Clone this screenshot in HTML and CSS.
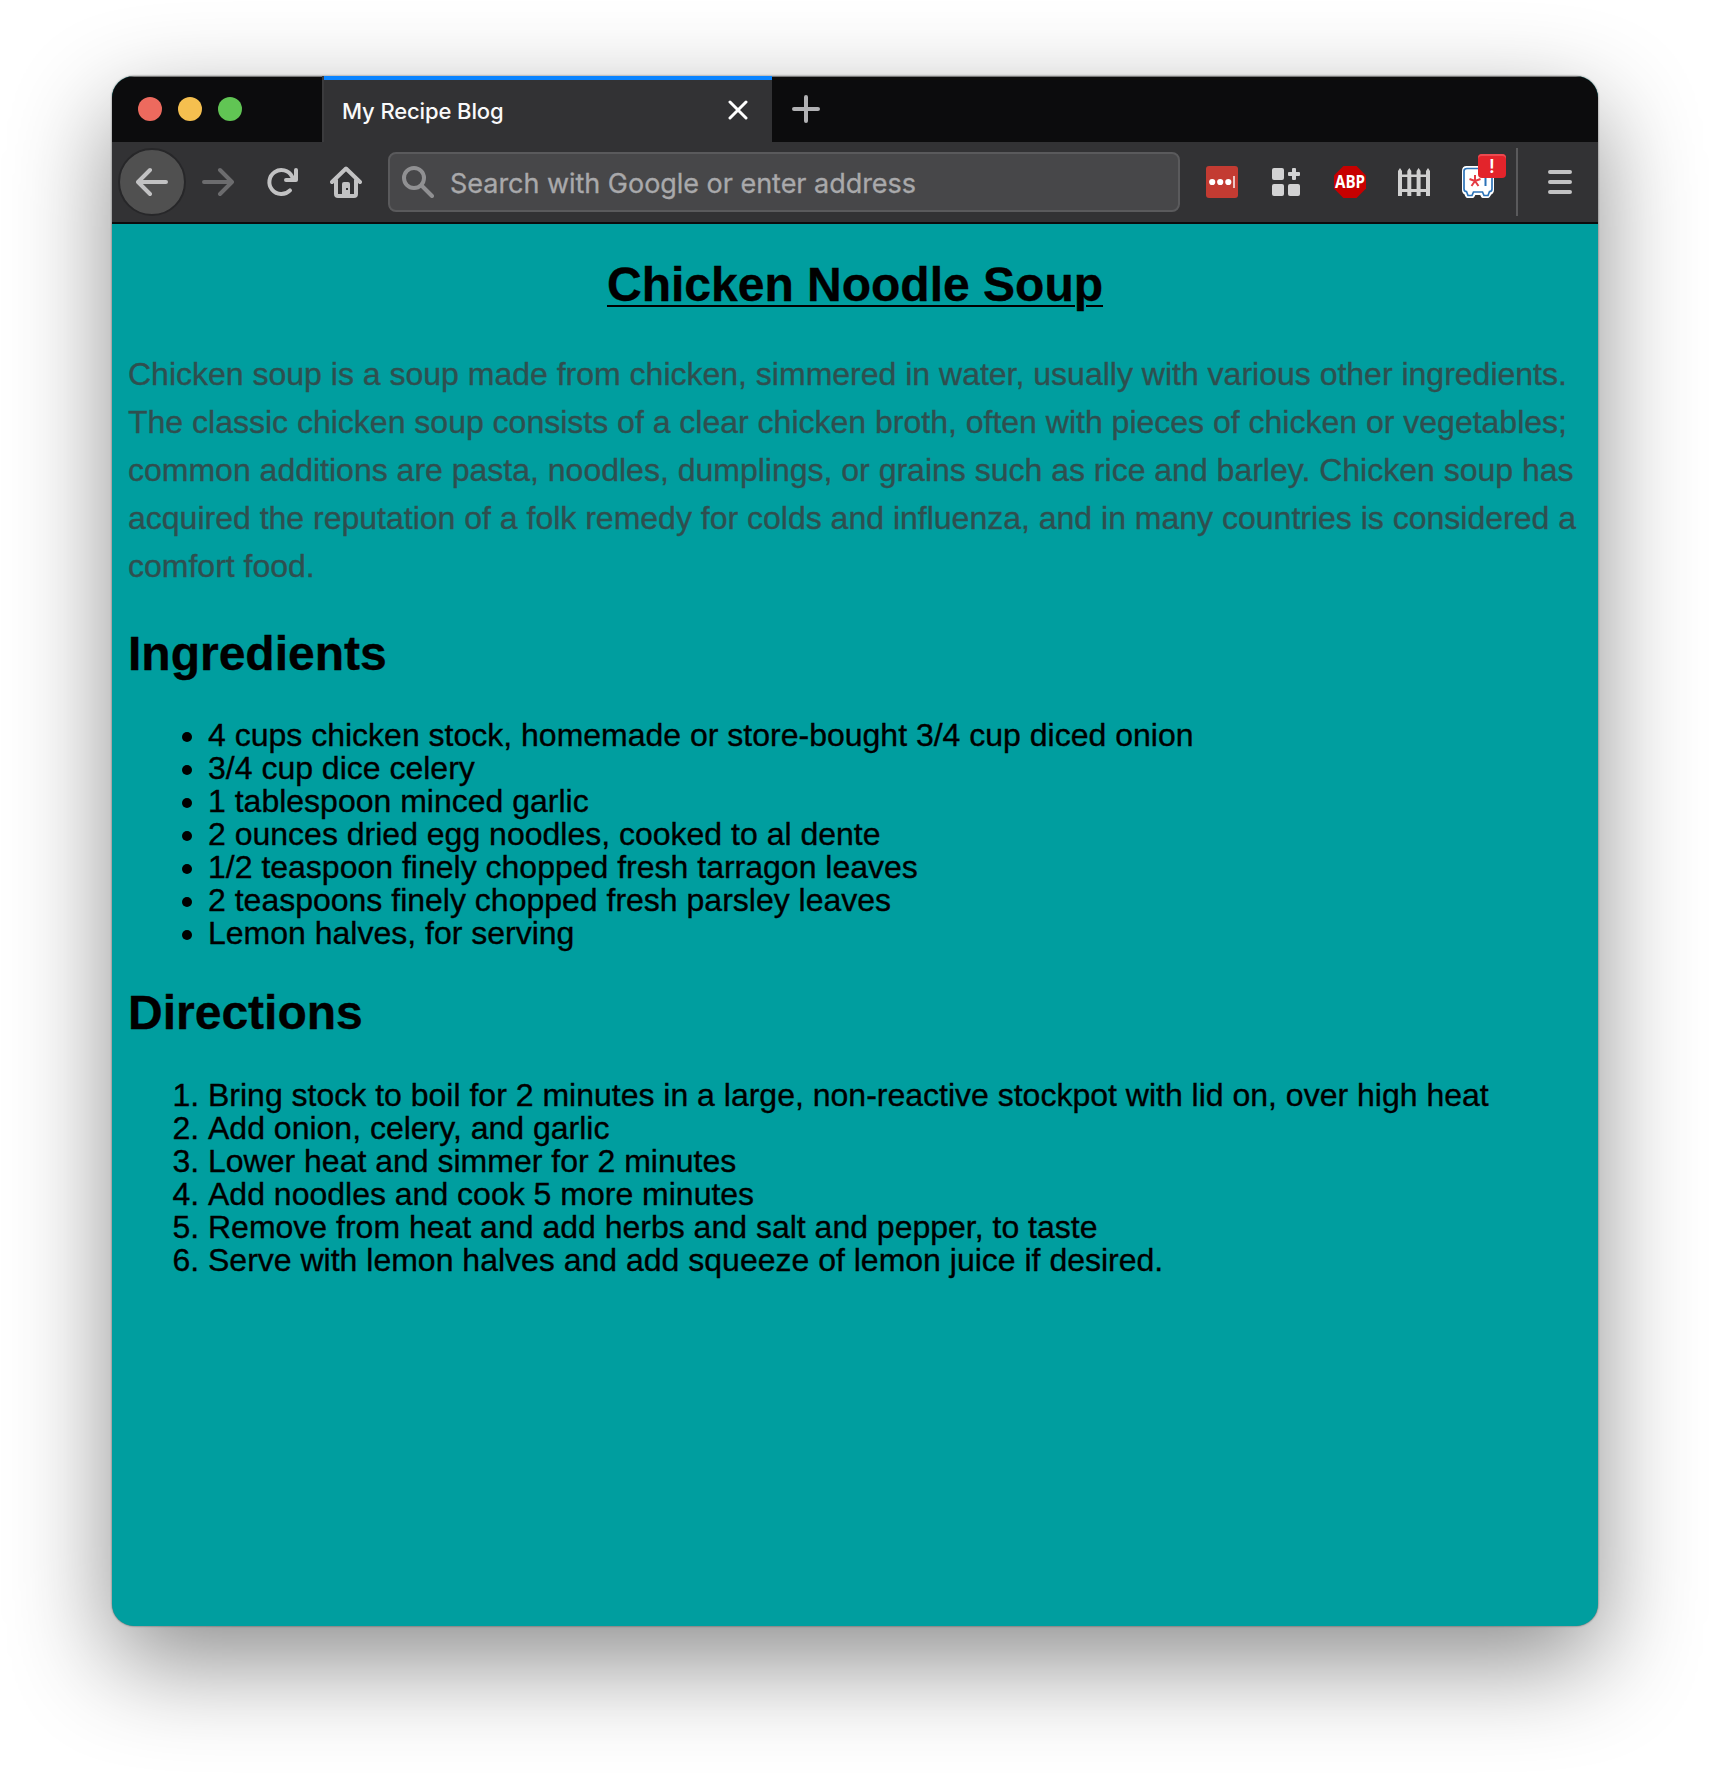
FILE: index.html
```html
<!DOCTYPE html>
<html lang="en">
<head>
<meta charset="utf-8">
<title>My Recipe Blog</title>
<link rel="stylesheet" href="styles.css">
</head>
<body>
<div class="window">
  <div class="tabbar">
    <div class="lights"><span class="light red"></span><span class="light yellow"></span><span class="light green"></span></div>
    <div class="tab">
      <span class="tab-title">My Recipe Blog</span>
      <svg class="close" width="20" height="20" viewBox="0 0 20 20"><path d="M2 2 18 18M18 2 2 18"/></svg>
    </div>
    <svg class="plus" width="28" height="28" viewBox="0 0 28 28"><path d="M14 2V26M2 14H26"/></svg>
  </div>
  <div class="toolbar">
    <span class="back"><svg class="ico" width="32" height="32" viewBox="0 0 32 32"><path d="M30 16H3M14 4 2 16 14 28"/></svg></span>
    <svg class="ico forward" width="32" height="32" viewBox="0 0 32 32"><path d="M2 16H29M18 4 30 16 18 28"/></svg>
    <svg class="ico reload" width="32" height="32" viewBox="0 0 32 32"><path d="M24 24.400A12 12 0 1 1 26 10.500L28 13.500M30 4V14H20"/></svg>
    <svg class="home" width="32" height="32" viewBox="0 0 32 32"><path class="home-line" d="M2 16 16 2.5 30 16M6 14V28Q6 30 8 30H24Q26 30 26 28V14"/><path class="home-door" d="M12 29V18Q12 16 14 16H18Q20 16 20 18V29Z"/><rect class="home-knob" x="16" y="22" width="2" height="2"/></svg>
    <div class="address">
      <svg class="search" width="32" height="32" viewBox="0 0 32 32"><circle cx="12" cy="12" r="10"/><path d="M19.5 19.5 30 30"/></svg>
      <span class="hint">Search with Google or enter address</span>
    </div>
    <div class="extensions">
      <svg width="32" height="32" viewBox="0 0 32 32"><rect width="32" height="32" rx="3" fill="#c33b32"/><g fill="#fff"><circle cx="6.2" cy="16" r="3.1"/><circle cx="14.2" cy="16" r="3.1"/><circle cx="22.3" cy="16" r="3.1"/><rect x="27" y="10" width="2" height="12" fill="#edc4c1"/></g></svg>
      <svg width="32" height="32" viewBox="0 0 32 32" fill="#d2d2d3"><rect x="2" y="2" width="12" height="12" rx="2"/><rect x="2" y="18" width="12" height="12" rx="2"/><rect x="18" y="18" width="12" height="12" rx="2"/><path d="M22 3Q22 2 23 2H25Q26 2 26 3V6H29Q30 6 30 7V9Q30 10 29 10H26V13Q26 14 25 14H23Q22 14 22 13V10H19Q18 10 18 9V7Q18 6 19 6H22Z"/></svg>
      <svg width="32" height="32" viewBox="0 0 32 32"><path d="M9.4 0H22.6L32 9.4V22.6L22.6 32H9.4L0 22.6V9.4Z" fill="#c70000"/><text class="abp" x="1" y="22.4" textLength="30" lengthAdjust="spacingAndGlyphs">ABP</text></svg>
      <svg width="32" height="32" viewBox="0 0 32 32" fill="#d0d0d0"><path d="M0 30V5L2 2 4 5V30ZM9.3 30V5L11.3 2 13.3 5V30ZM18.6 30V5L20.6 2 22.6 5V30ZM28 30V5L30 2 32 5V30Z"/><path d="M0 8.5H32V11H0ZM0 23H32V26H0Z"/></svg>
      <span class="vault"><svg width="32" height="32" viewBox="0 0 32 32"><path d="M4.500 2H27Q30 2 30 5V24Q30 26 28 27L26 30H21L19.500 27H12L10.500 30H5.500L4 27Q2 26 2 24V5Q2 2 4.500 2Z" fill="#fff" stroke="#fff" stroke-width="4" stroke-linejoin="round"/><path d="M5 2.500H27Q30 2.500 30 5V23Q30 25.500 27.500 25.500L26 29.500H22L20.500 26H11.500L10 29.500H6L4.500 25.500Q2 25.500 2 23V5Q2 2.500 5 2.500Z" fill="#fff" stroke="#2c73b8" stroke-width="1.700"/><path d="M13 9V15M13 15 7.500 13M13 15 18.500 13M13 15 9.500 20M13 15 16.500 20" stroke="#e43a43" stroke-width="2"/><path d="M23.500 12V20" stroke="#2c73b8" stroke-width="2"/></svg><span class="badge">!</span></span>
    </div>
    <span class="divider"></span>
    <svg class="menu" width="24" height="24" viewBox="0 0 24 24"><path d="M2 2H22M2 12H22M2 22H22"/></svg>
  </div>
  <main class="page">
    <h1 class="title">Chicken Noodle Soup</h1>
    <p class="intro">Chicken soup is a soup made from chicken, simmered in water, usually with various other ingredients. The classic chicken soup consists of a clear chicken broth, often with pieces of chicken or vegetables; common additions are pasta, noodles, dumplings, or grains such as rice and barley. Chicken soup has acquired the reputation of a folk remedy for colds and influenza, and in many countries is considered a comfort food.</p>
    <h2 class="subtitle">Ingredients</h2>
    <ul class="list">
      <li>4 cups chicken stock, homemade or store-bought 3/4 cup diced onion</li>
      <li>3/4 cup dice celery</li>
      <li>1 tablespoon minced garlic</li>
      <li>2 ounces dried egg noodles, cooked to al dente</li>
      <li>1/2 teaspoon finely chopped fresh tarragon leaves</li>
      <li>2 teaspoons finely chopped fresh parsley leaves</li>
      <li>Lemon halves, for serving</li>
    </ul>
    <h2 class="subtitle directions">Directions</h2>
    <ol class="list">
      <li>Bring stock to boil for 2 minutes in a large, non-reactive stockpot with lid on, over high heat</li>
      <li>Add onion, celery, and garlic</li>
      <li>Lower heat and simmer for 2 minutes</li>
      <li>Add noodles and cook 5 more minutes</li>
      <li>Remove from heat and add herbs and salt and pepper, to taste</li>
      <li>Serve with lemon halves and add squeeze of lemon juice if desired.</li>
    </ol>
  </main>
</div>
</body>
</html>
```
FILE: styles.css
```css
* { box-sizing: border-box; }
body { margin: 0; padding: 76px 112px 148px; background: #fff; overflow: hidden; }
.window {
  width: 1486px; height: 1550px; border-radius: 22px; overflow: hidden;
  display: flex; flex-direction: column; background: #009e9f;
  box-shadow: 0 0 2px rgba(0,0,0,.6), 0 36px 100px rgba(0,0,0,.45);
}
.tabbar { height: 66px; flex: none; display: flex; background: #0c0c0d; box-shadow: inset 0 1px #777; }
.lights { width: 210px; padding: 21px 0 0 26px; display: flex; gap: 16px; }
.light { width: 24px; height: 24px; border-radius: 50%; }
.red { background: #ed6a5e; }
.yellow { background: #f5bf4f; }
.green { background: #61c554; }
.tab {
  width: 450px; display: flex; justify-content: space-between; align-items: center;
  padding: 0 24px 0 18px; background: #323234; border-left: 2px solid #3b3b3d;
  box-shadow: inset 0 4px #0a84ff;
}
.tab-title { font: 500 22px/26px Inter, sans-serif; letter-spacing: -.12px; color: #f9f9fa; padding-top: 3px; }
.close { margin-top: 2px; stroke: #fff; stroke-width: 3; stroke-linecap: round; }
.plus { margin: 19px 0 0 20px; stroke: #b1b1b3; stroke-width: 4; stroke-linecap: round; }
.toolbar {
  height: 82px; flex: none; display: flex; align-items: center;
  padding: 0 26px 2px 6px; background: #323234; box-shadow: inset 0 -2px #0c0c0d;
}
.back {
  width: 68px; height: 68px; border-radius: 50%; border: 2px solid #272729; background: #505050;
  display: flex; align-items: center; justify-content: center;
}
.ico { fill: none; stroke: #c2c2c3; stroke-width: 4; stroke-linecap: round; stroke-linejoin: round; }
.forward { margin-left: 16px; stroke: #6c6c6e; }
.reload { margin-left: 32px; }
.home { margin-left: 32px; }
.home-line { fill: none; stroke: #c2c2c3; stroke-width: 4; stroke-linecap: round; stroke-linejoin: round; }
.home-door { fill: #c2c2c3; }
.home-knob { fill: #323234; }
.address {
  width: 792px; height: 60px; margin-left: 26px; padding-left: 12px; display: flex; align-items: center;
  background: #474749; border: 2px solid #5a5a5c; border-radius: 8px;
}
.search { fill: none; stroke: #909092; stroke-width: 4; stroke-linecap: round; }
.hint {
  margin-left: 16px; padding-top: 4px; font: 27px/36px Inter, sans-serif; letter-spacing: -.03px;
  color: #a9a9ab; white-space: nowrap; -webkit-text-stroke: .3px;
}
.extensions { display: flex; gap: 32px; margin-left: 26px; }
.extensions svg { display: block; }
.abp { font: 700 17.5px "Open Sans", sans-serif; fill: #fff; }
.vault { position: relative; }
.badge {
  position: absolute; left: 16px; top: -12px; width: 28px; height: 24px; border-radius: 4px;
  background: #e3242b; box-shadow: inset 0 2px #ec4a50; color: #fff;
  font: 600 18px/25px Inter, sans-serif; text-align: center;
}
.divider { width: 2px; height: 68px; margin-left: 22px; background: #5a5a5c; }
.menu { margin-left: 30px; stroke: #c2c2c3; stroke-width: 4; stroke-linecap: round; }
.page {
  flex: 1; padding: 37px 16px 0; font: 32px/33px "Liberation Sans", Arial, sans-serif; color: #000;
  -webkit-text-stroke: .35px;
}
.title, .subtitle { font-size: 48px; line-height: 48px; font-weight: 700; }
.title { margin: 0 0 41px; text-align: center; text-decoration: underline; text-decoration-thickness: 2px; text-underline-offset: 4px; }
.subtitle { margin: 40px 0 41px; }
.directions { margin: 39px 0 42px; }
.intro { margin: 0; line-height: 48px; color: #2f4f4f; }
.list { margin: 0; padding-left: 80px; }
```
